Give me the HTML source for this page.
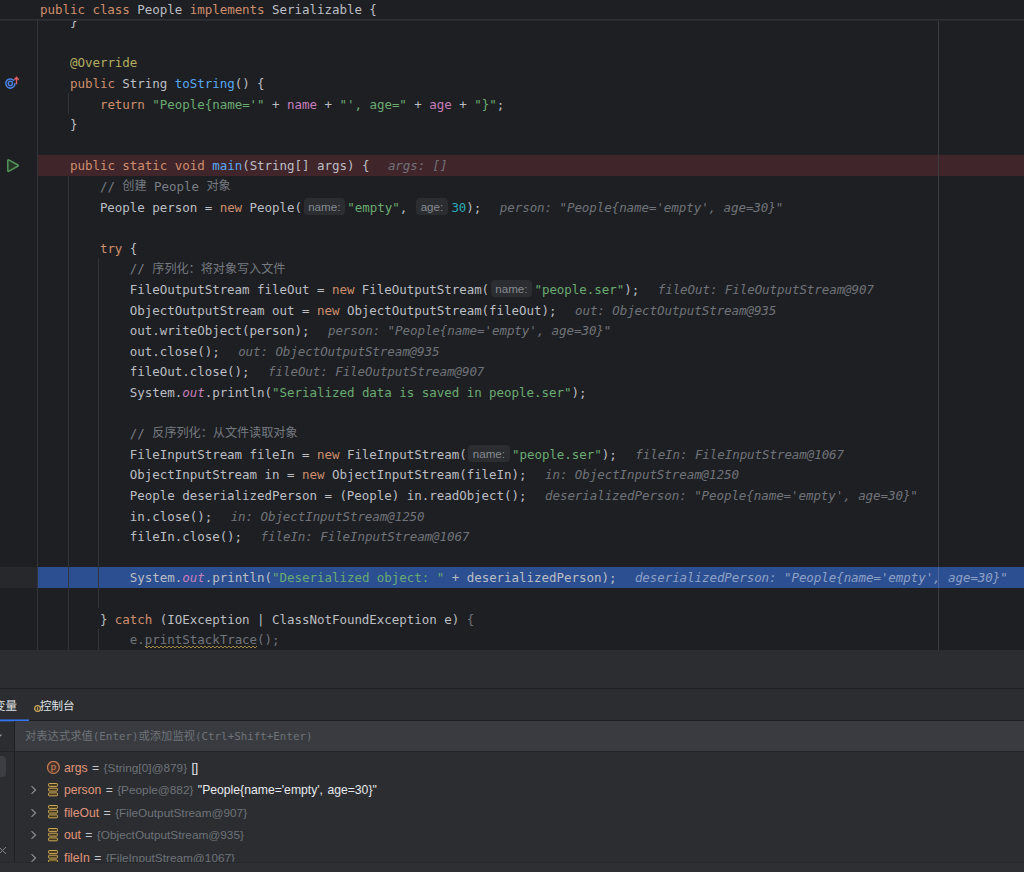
<!DOCTYPE html>
<html lang="zh-CN"><head><meta charset="utf-8"><title>People.java</title>
<style>
html,body{margin:0;padding:0;background:#1e1f22;}
body{width:1024px;height:872px;overflow:hidden;position:relative;font-family:"DejaVu Sans Mono","Liberation Mono","Noto Sans CJK SC",monospace;}
#ed{position:absolute;left:0;top:0;width:1024px;height:650px;background:#1e1f22;overflow:hidden;}
.ln{position:absolute;left:40.0px;white-space:pre;font-size:12.5px;line-height:20.6px;height:20.6px;color:#bcbec4;letter-spacing:-0.041px;}
.bar{position:absolute;left:38px;width:986px;height:20.6px;}
.k{color:#cf8e6d} .s{color:#6aab73} .n{color:#2aacb8} .c{color:#7a7e85} .m{color:#56a8f5}
.f{color:#c77dbb} .sf{color:#c77dbb;font-style:italic} .a{color:#b3ae60} .d{color:#70747b}
.z{font-family:"Liberation Sans","Noto Sans CJK SC",sans-serif;font-size:12.15px;position:relative;top:-0.8px;color:#757980}
.h{color:#707379;font-style:italic;margin-left:18.5px;letter-spacing:-0.07px}
.ex .h{color:#8fa1c6}
.il{display:inline-block;box-sizing:border-box;height:17px;line-height:17px;vertical-align:top;background:#2b2d30;color:#868a91;border-radius:4px;font-family:"Liberation Sans",sans-serif;font-size:11.6px;text-align:center;font-style:normal;letter-spacing:0}
.nm{width:41.5px;margin:0.5px 2.3px 0 1.5px}
.ag{width:32.5px;margin:0.5px 3.2px 0 1px}
.w{color:#70747b}
.vl{position:absolute;width:1px;background:#313438}
</style>
<style>
#bp{position:absolute;left:0;top:650px;width:1024px;height:222px;background:#2b2d30;overflow:hidden;font-family:"Liberation Sans","Noto Sans CJK SC",sans-serif;}
.sep{position:absolute;left:0;width:1024px;height:1px;background:#1e1f22}
.tab1{position:absolute;left:-6px;top:46px;font-size:11.5px;line-height:20px;color:#dfe1e5;font-family:"Liberation Sans","Noto Sans CJK SC",sans-serif;white-space:pre}
.ul{position:absolute;left:0;width:29px;height:1px;background:#3574f0}
.ci{position:absolute;left:33px;top:54px}
.tab2{position:absolute;left:40px;top:46px;font-size:11.5px;line-height:20px;color:#dfe1e5;font-family:"Liberation Sans","Noto Sans CJK SC",sans-serif;white-space:pre}
.inp{position:absolute;left:15px;top:71px;width:1009px;height:30px;background:#393b40}
.ph{position:absolute;left:10px;top:0px;line-height:30px;font-size:10.85px;color:#6f737a;white-space:pre;font-family:"DejaVu Sans Mono","Liberation Mono","Noto Sans CJK SC",monospace}
.pz{font-family:"Liberation Sans","Noto Sans CJK SC",sans-serif;font-size:11.3px}
.lvl{position:absolute;left:14px;top:71px;width:1px;height:141px;background:#1e1f22}
.selbox{position:absolute;left:-6px;top:106px;width:12px;height:21px;border-radius:4px;background:#3c3e43}
.row{position:absolute;left:64px;font-size:12.2px;line-height:20px;color:#c3c6cc;white-space:pre;word-spacing:1px}
.vn{color:#e0957b}.vt{color:#6f737a;font-size:11.8px}.vv{color:#e8eaee}
.status{position:absolute;left:0;top:212px;width:1024px;height:10px;background:#2d2f33;border-top:1px solid #26282b;box-sizing:border-box}
</style>
</head><body>
<div id="ed">

<div class="bar" style="top:155.0px;background:#40252b"></div>
<div class="bar" style="top:567.0px;background:#2b4f91"></div>
<div style="position:absolute;left:0;top:567.0px;width:38px;height:20.6px;background:#26282c"></div>
<div class="vl" style="left:68px;top:93.2px;height:20.6px;background:#313438"></div>
<div class="vl" style="left:68px;top:175.6px;height:474.4px;background:#313438"></div>
<div class="vl" style="left:98px;top:258.0px;height:350.2px;background:#313438"></div>
<div class="vl" style="left:98px;top:628.8px;height:21.2px;background:#313438"></div>
<div class="ln" style="top:12.1px">    }</div>
<div class="ln" style="top:53.3px">    <span class="a">@Override</span></div>
<div class="ln" style="top:73.9px">    <span class="k">public</span> String <span class="m">toString</span>() {</div>
<div class="ln" style="top:94.5px">        <span class="k">return</span> <span class="s">"People{name='"</span> + <span class="f">name</span> + <span class="s">"', age="</span> + <span class="f">age</span> + <span class="s">"}"</span>;</div>
<div class="ln" style="top:115.1px">    }</div>
<div class="ln" style="top:156.3px">    <span class="k">public static void</span> <span class="m">main</span>(String[] args) {<span class="h">args: []</span></div>
<div class="ln" style="top:176.9px">        <span class="c">// <span class="z">创建</span> People <span class="z">对象</span></span></div>
<div class="ln" style="top:197.5px">        People person = <span class="k">new</span> People(<span class="il nm">name:</span><span class="s">"empty"</span>, <span class="il ag">age:</span><span class="n">30</span>);<span class="h">person: "People{name='empty', age=30}"</span></div>
<div class="ln" style="top:238.7px">        <span class="k">try</span> {</div>
<div class="ln" style="top:259.3px">            <span class="c">// <span class="z">序列化：将对象写入文件</span></span></div>
<div class="ln" style="top:279.9px">            FileOutputStream fileOut = <span class="k">new</span> FileOutputStream(<span class="il nm">name:</span><span class="s">"people.ser"</span>);<span class="h">fileOut: FileOutputStream@907</span></div>
<div class="ln" style="top:300.5px">            ObjectOutputStream out = <span class="k">new</span> ObjectOutputStream(fileOut);<span class="h">out: ObjectOutputStream@935</span></div>
<div class="ln" style="top:321.1px">            out.writeObject(person);<span class="h">person: "People{name='empty', age=30}"</span></div>
<div class="ln" style="top:341.7px">            out.close();<span class="h">out: ObjectOutputStream@935</span></div>
<div class="ln" style="top:362.3px">            fileOut.close();<span class="h">fileOut: FileOutputStream@907</span></div>
<div class="ln" style="top:382.9px">            System.<span class="sf">out</span>.println(<span class="s">"Serialized data is saved in people.ser"</span>);</div>
<div class="ln" style="top:424.1px">            <span class="c">// <span class="z">反序列化：从文件读取对象</span></span></div>
<div class="ln" style="top:444.7px">            FileInputStream fileIn = <span class="k">new</span> FileInputStream(<span class="il nm">name:</span><span class="s">"people.ser"</span>);<span class="h">fileIn: FileInputStream@1067</span></div>
<div class="ln" style="top:465.3px">            ObjectInputStream in = <span class="k">new</span> ObjectInputStream(fileIn);<span class="h">in: ObjectInputStream@1250</span></div>
<div class="ln" style="top:485.9px">            People deserializedPerson = (People) in.readObject();<span class="h">deserializedPerson: "People{name='empty', age=30}"</span></div>
<div class="ln" style="top:506.5px">            in.close();<span class="h">in: ObjectInputStream@1250</span></div>
<div class="ln" style="top:527.1px">            fileIn.close();<span class="h">fileIn: FileInputStream@1067</span></div>
<div class="ln ex" style="top:568.3px">            System.<span class="sf">out</span>.println(<span class="s">"Deserialized object: "</span> + deserializedPerson);<span class="h">deserializedPerson: "People{name='empty', age=30}"</span></div>
<div class="ln" style="top:609.5px">        } <span class="k">catch</span> (IOException | ClassNotFoundException e) <span class="d">{</span></div>
<div class="ln" style="top:630.1px">            <span class="d">e.</span><span class="w">printStackTrace</span><span class="d">();</span></div>
<svg style="position:absolute;left:145px;top:645px" width="113" height="4" viewBox="0 0 113 4"><polyline points="0,1.0 2,3.0 4,1.0 6,3.0 8,1.0 10,3.0 12,1.0 14,3.0 16,1.0 18,3.0 20,1.0 22,3.0 24,1.0 26,3.0 28,1.0 30,3.0 32,1.0 34,3.0 36,1.0 38,3.0 40,1.0 42,3.0 44,1.0 46,3.0 48,1.0 50,3.0 52,1.0 54,3.0 56,1.0 58,3.0 60,1.0 62,3.0 64,1.0 66,3.0 68,1.0 70,3.0 72,1.0 74,3.0 76,1.0 78,3.0 80,1.0 82,3.0 84,1.0 86,3.0 88,1.0 90,3.0 92,1.0 94,3.0 96,1.0 98,3.0 100,1.0 102,3.0 104,1.0 106,3.0 108,1.0 110,3.0 112,1.0" fill="none" stroke="#b1964a" stroke-width="0.9"/></svg>
<div class="vl" style="left:938px;top:20.0px;height:630.0px;background:#393b40"></div>
<div class="vl" style="left:938px;top:567.0px;height:20.6px;background:#4d659a"></div>
<div style="position:absolute;left:0;top:0;width:1024px;height:19px;background:#1e1f22;border-bottom:1px solid #303135;box-shadow:0 1px 0 #28292c"></div>
<div class="ln" style="top:0px"><span class="k">public class</span> People <span class="k">implements</span> Serializable {</div>
<div class="vl" style="left:37px;top:20.0px;height:630.0px;background:#313438"></div>
<svg style="position:absolute;left:0;top:70px" width="38" height="30" viewBox="0 70 38 30">
<path d="M13.6 80.2A4.6 4.6 0 1 0 15 83.6" fill="none" stroke="#4a82e8" stroke-width="1.5" stroke-linecap="round"/>
<circle cx="10.4" cy="83.4" r="2.1" fill="none" stroke="#4a82e8" stroke-width="1.4"/>
<path d="M16.5 84.3V77.6M14.3 79.8l2.2-2.4 2.2 2.4" fill="none" stroke="#e05a5f" stroke-width="1.4" stroke-linejoin="miter"/></svg>
<svg style="position:absolute;left:0;top:150px" width="38" height="30" viewBox="0 150 38 30">
<path d="M7.8 160.4V170.8a0.6 0.6 0 0 0 0.9 0.5L18 166a0.6 0.6 0 0 0 0-1L8.7 159.9a0.6 0.6 0 0 0-0.9 0.5Z" fill="#253627" stroke="#54935b" stroke-width="1.5" stroke-linejoin="round"/></svg>
</div>
<div id="bp">
<div class="sep" style="top:38px"></div>
<div class="tab1">变量</div>
<svg class="ci" width="9" height="9" viewBox="0 0 9 9"><circle cx="4.5" cy="4.5" r="2.9" fill="#2b2d30" stroke="#d6ae58" stroke-width="1.2"/><path d="M4.5 3v2.8M3.5 4.8l1 1 1-1" stroke="#d6ae58" stroke-width="0.8" fill="none"/></svg>
<div class="tab2">控制台</div>
<div class="sep" style="top:70px"></div>
<div class="ul" style="top:69px;opacity:.55"></div><div class="ul" style="top:70px"></div><div class="ul" style="top:71px;opacity:.3"></div>
<div class="inp"><span class="ph"><span class="pz">对表达式求值</span>(Enter)<span class="pz">或添加监视</span>(Ctrl+Shift+Enter)</span></div>
<div class="sep" style="top:101px;background:#232427"></div>
<div class="lvl"></div>
<svg style="position:absolute;left:-6px;top:82px" width="10" height="8" viewBox="0 0 10 8"><path d="M1.5 2.5l3 3 3-3" fill="none" stroke="#9da0a8" stroke-width="1.1"/></svg>
<div class="selbox"></div>
<svg style="position:absolute;left:-2px;top:196px" width="9" height="9" viewBox="0 0 9 9"><path d="M1 1l7 7M8 1l-7 7" fill="none" stroke="#7f838a" stroke-width="1"/></svg>

<svg style="position:absolute;left:46px;top:111.0px" width="14" height="14" viewBox="0 0 14 14"><circle cx="7.4" cy="6.4" r="5.9" fill="#45322a" stroke="#c77d55" stroke-width="1.2"/><text x="7.5" y="8.6" text-anchor="middle" font-family="Liberation Sans,sans-serif" font-size="9.5" fill="#d08a5e">p</text></svg>
<div class="row" style="top:108.0px"><span class="vn">args</span> = <span class="vt">{String[0]@879}</span> <span class=vv>[]</span></div>
<svg style="position:absolute;left:29px;top:134.4px" width="9" height="12" viewBox="0 0 9 12"><path d="M2.5 2.2l4 3.8-4 3.8" fill="none" stroke="#8e9299" stroke-width="1.15"/></svg>
<svg style="position:absolute;left:48px;top:133px" width="10" height="14" viewBox="0 0 10 14"><g fill="#43391f" stroke="#cfa855" stroke-width="1"><rect x="0.6" y="0.5" width="8.8" height="2.9" rx="0.6"/><rect x="0.6" y="5.2" width="8.8" height="2.9" rx="0.6"/><rect x="0.6" y="9.9" width="8.8" height="2.9" rx="0.6"/></g></svg>
<div class="row" style="top:130.4px"><span class="vn">person</span> = <span class="vt">{People@882}</span> <span class=vv>"People{name='empty', age=30}"</span></div>
<svg style="position:absolute;left:29px;top:156.8px" width="9" height="12" viewBox="0 0 9 12"><path d="M2.5 2.2l4 3.8-4 3.8" fill="none" stroke="#8e9299" stroke-width="1.15"/></svg>
<svg style="position:absolute;left:48px;top:155px" width="10" height="14" viewBox="0 0 10 14"><g fill="#43391f" stroke="#cfa855" stroke-width="1"><rect x="0.6" y="0.5" width="8.8" height="2.9" rx="0.6"/><rect x="0.6" y="5.2" width="8.8" height="2.9" rx="0.6"/><rect x="0.6" y="9.9" width="8.8" height="2.9" rx="0.6"/></g></svg>
<div class="row" style="top:152.8px"><span class="vn">fileOut</span> = <span class="vt">{FileOutputStream@907}</span></div>
<svg style="position:absolute;left:29px;top:179.2px" width="9" height="12" viewBox="0 0 9 12"><path d="M2.5 2.2l4 3.8-4 3.8" fill="none" stroke="#8e9299" stroke-width="1.15"/></svg>
<svg style="position:absolute;left:48px;top:178px" width="10" height="14" viewBox="0 0 10 14"><g fill="#43391f" stroke="#cfa855" stroke-width="1"><rect x="0.6" y="0.5" width="8.8" height="2.9" rx="0.6"/><rect x="0.6" y="5.2" width="8.8" height="2.9" rx="0.6"/><rect x="0.6" y="9.9" width="8.8" height="2.9" rx="0.6"/></g></svg>
<div class="row" style="top:175.2px"><span class="vn">out</span> = <span class="vt">{ObjectOutputStream@935}</span></div>
<svg style="position:absolute;left:29px;top:201.6px" width="9" height="12" viewBox="0 0 9 12"><path d="M2.5 2.2l4 3.8-4 3.8" fill="none" stroke="#8e9299" stroke-width="1.15"/></svg>
<svg style="position:absolute;left:48px;top:200px" width="10" height="14" viewBox="0 0 10 14"><g fill="#43391f" stroke="#cfa855" stroke-width="1"><rect x="0.6" y="0.5" width="8.8" height="2.9" rx="0.6"/><rect x="0.6" y="5.2" width="8.8" height="2.9" rx="0.6"/><rect x="0.6" y="9.9" width="8.8" height="2.9" rx="0.6"/></g></svg>
<div class="row" style="top:197.6px"><span class="vn">fileIn</span> = <span class="vt">{FileInputStream@1067}</span></div>
<div class="status"></div>
</div>

</body></html>
